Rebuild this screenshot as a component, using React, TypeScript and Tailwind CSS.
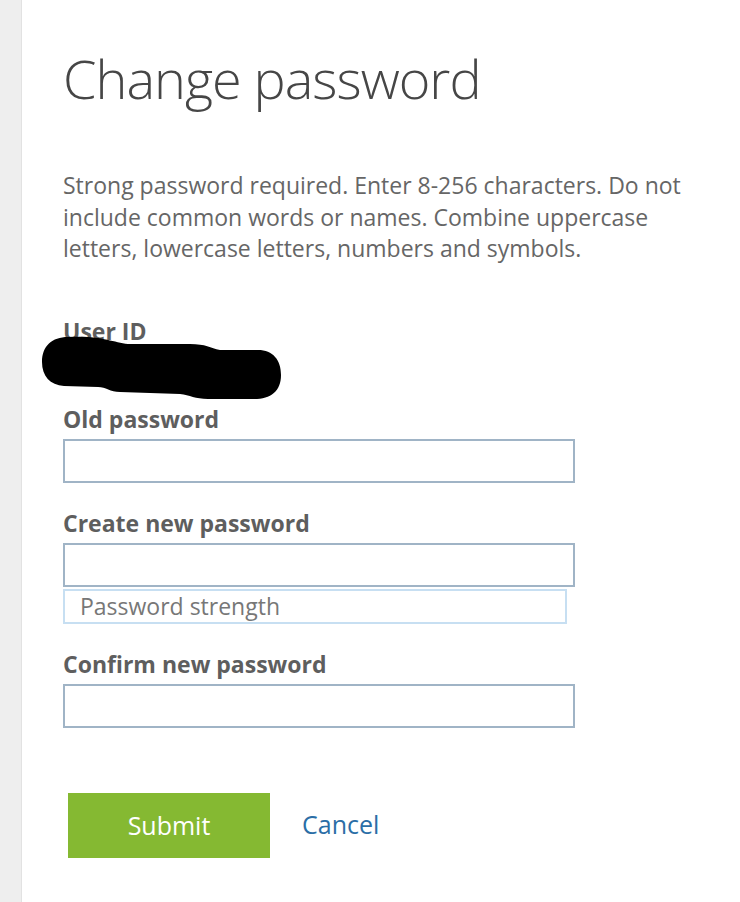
import React from "react";

const font = { fontFamily: '"Open Sans", "Noto Sans", sans-serif' };

function Field({ label, children }: { label: string; children?: React.ReactNode }) {
  return (
    <div className="flex flex-col">
      <label className="text-[23px] font-bold leading-[28px] text-[#5e5e5e]">{label}</label>
      <input
        type="password"
        className="mt-[6px] h-[44px] w-[512px] border-2 border-[#a0b4c6] bg-white outline-none"
      />
      {children}
    </div>
  );
}

export default function App() {
  return (
    <div className="flex min-h-[902px] w-[740px] bg-white" style={font}>
      {/* left rail */}
      <div className="w-[22px] shrink-0 border-r border-[#e2e2e2] bg-[#eeeeee]" />

      <div className="flex-1 pl-[41px] pt-[38px]">
        <h1 className="text-[54px] font-light leading-[80px] tracking-[-1px] text-[#464646]">Change password</h1>

        <p className="mt-[52px] w-[660px] text-[23px] leading-[31.5px] text-[#666666]">
          Strong password required. Enter 8-256 characters. Do not include common words or names. Combine uppercase
          letters, lowercase letters, numbers and symbols.
        </p>

        <div className="mt-[52px] flex flex-col">
          <span className="text-[23px] font-bold leading-[28px] text-[#5e5e5e]">User ID</span>
          {/* redacted value */}
          <svg width="242" height="66" viewBox="0 0 242 66" className="-mt-[10px] -ml-[23px]">
            <path
              d="M28 2 C60 0 72 7 88 9 L150 9 C166 9 170 13 180 15 L218 15 C233 15 241 25 241 40 C241 56 231 64 214 64 L168 64 C155 64 150 60 140 59 L80 57 C70 57 66 52 58 52 L24 51 C10 50 2 41 2 27 C2 11 12 2 28 2 Z"
              fill="#000"
            />
          </svg>
        </div>

        <div className="mt-[4px] flex flex-col gap-[26px]">
          <Field label="Old password" />
          <Field label="Create new password">
            <div className="mt-[2px] flex h-[35px] w-[504px] items-center border-2 border-[#c7dff2] pl-[15px] text-[23px] text-[#777777]">
              Password strength
            </div>
          </Field>
          <Field label="Confirm new password" />
        </div>

        <div className="mt-[65px] flex items-center gap-[32px]">
          <button className="ml-[5px] h-[65px] w-[202px] bg-[#85b932] text-[25px] leading-[65px] text-white">
            Submit
          </button>
          <a href="#" className="text-[25px] text-[#2b6ea6]">
            Cancel
          </a>
        </div>
      </div>
    </div>
  );
}
